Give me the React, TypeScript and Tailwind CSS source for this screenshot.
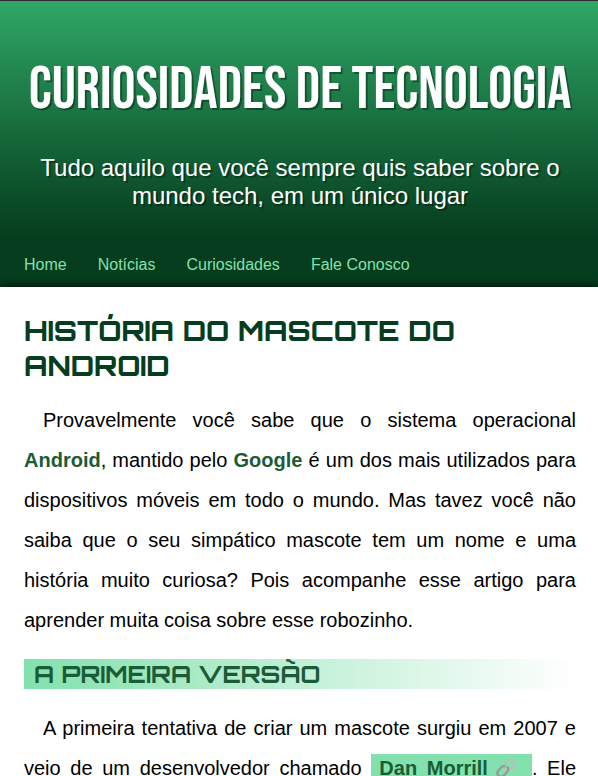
const links = ['Home', 'Notícias', 'Curiosidades', 'Fale Conosco'];

function ChainIcon() {
  return (
    <svg
      className="mr-2 ml-2 inline-block h-5 w-5 align-text-bottom"
      viewBox="0 0 20 20"
      fill="none"
      strokeWidth="2.4"
      strokeLinecap="round"
      aria-hidden="true"
    >
      <path d="M8 9.800c-.8-1.600-.4-3 .8-4.400l2-2.200c1.800-2 4.200-2.400 6-1 1.800 1.500 1.700 3.700.2 5.500l-2.200 2.500c-1 1.200-2 1.700-3.400 1.600" stroke="#bdbdbd" />
      <path d="M11.600 8.400c1 1.600.6 3.200-.6 4.600l-2.200 2.600c-1.700 2-4.200 2.500-6 1.100-1.800-1.500-1.700-3.700-.2-5.500l2.200-2.500c1-1.200 2.200-1.700 3.600-1.500" stroke="#999999" />
    </svg>
  );
}

export default function App() {
  return (
    <div className="h-screen overflow-hidden border-t border-[#2b2a33] bg-white font-['Liberation_Sans',Arial,sans-serif] text-black">
      <header className="bg-linear-to-b from-[#2fa866] to-[#063d1e] pt-[55px] pr-[22px] pb-[27px] pl-6 text-center text-white">
        <h1 className="whitespace-nowrap font-['Bebas_Neue','Liberation_Sans_Narrow','Liberation_Sans',sans-serif] text-6xl leading-[68px] font-normal [text-shadow:2px_2px_0_rgba(0,0,0,0.35)]">
          CURIOSIDADES DE TECNOLOGIA
        </h1>
        <p className="mt-[30px] text-2xl leading-7 [text-shadow:2px_2px_0_rgba(0,0,0,0.35)]">
          Tudo aquilo que você sempre quis saber sobre o mundo tech, em um único lugar
        </p>
      </header>
      <nav className="flex gap-[31px] bg-[#063d1e] px-6 pt-4 pb-[10px] text-base text-[#83e1ad]">
        {links.map((link) => (
          <a key={link} href="#">
            {link}
          </a>
        ))}
      </nav>
      <main className="relative bg-white pt-[26px] pr-[22px] pl-6 shadow-[0_0_10px_#000000]">
        <h1 className="font-['Orbitron','Liberation_Sans',sans-serif] text-[28px] leading-[35px] font-extrabold text-[#063d1e]">
          HISTÓRIA DO MASCOTE DO ANDROID
        </h1>
        <p className="mt-[17px] text-justify indent-[19px] text-xl leading-10">
          Provavelmente você sabe que o sistema operacional{' '}
          <strong className="text-[#1a5c37]">Android</strong>, mantido pelo{' '}
          <strong className="text-[#1a5c37]">Google</strong> é um dos mais utilizados para
          dispositivos móveis em todo o mundo. Mas tavez você não saiba que o seu simpático
          mascote tem um nome e uma história muito curiosa? Pois acompanhe esse artigo para
          aprender muita coisa sobre esse robozinho.
        </p>
        <h2 className="mt-[19px] bg-linear-to-r from-[#83e1ad] to-transparent pl-[10px] font-['Orbitron','Liberation_Sans',sans-serif] text-2xl leading-[30px] font-bold text-[#1a5c37]">
          A PRIMEIRA VERSÃO
        </h2>
        <p className="mt-[19px] text-justify indent-[19px] text-xl leading-10 [text-align-last:justify]">
          A primeira tentativa de criar um mascote surgiu em 2007 e veio de um desenvolvedor
          chamado{' '}
          <a href="#" className="bg-[#83e1ad] px-2 py-[3px] indent-0 font-bold text-[#1a5c37]">
            Dan Morrill
            <ChainIcon />
          </a>
          . Ele
        </p>
      </main>
    </div>
  );
}
